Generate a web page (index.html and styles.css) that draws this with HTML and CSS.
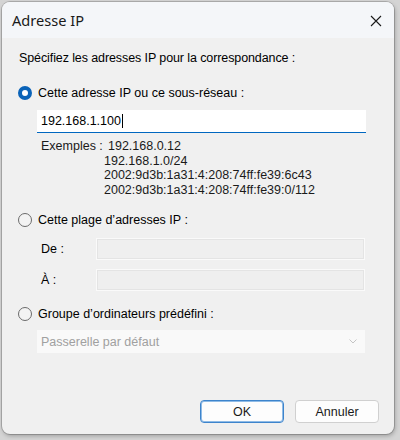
FILE: index.html
```html
<!DOCTYPE html>
<html lang="fr">
<head>
<meta charset="utf-8">
<title>Adresse IP</title>
<link rel="stylesheet" href="styles.css">
</head>
<body>
<div class="window">
  <div class="titlebar">
    <span class="title">Adresse IP</span>
    <svg class="close" width="12" height="12" viewBox="0 0 12 12"><path d="M1 1 L11 11 M11 1 L1 11" stroke="#1a1a1a" stroke-width="1.1" fill="none"/></svg>
  </div>
  <div class="content">
    <div class="prompt">Spécifiez les adresses IP pour la correspondance :</div>

    <div class="radio-row r1">
      <span class="radio checked"></span>
      <span>Cette adresse IP ou ce sous-réseau :</span>
    </div>
    <div class="ipinput"><span>192.168.1.100</span><span class="caret"></span></div>
    <div class="examples">
      <span class="ex-label">Exemples :</span>
      <div class="ex-list">
        <span class="first">192.168.0.12</span>
        <span>192.168.1.0/24</span>
        <span>2002:9d3b:1a31:4:208:74ff:fe39:6c43</span>
        <span>2002:9d3b:1a31:4:208:74ff:fe39:0/112</span>
      </div>
    </div>

    <div class="radio-row r2">
      <span class="radio"></span>
      <span>Cette plage d’adresses IP :</span>
    </div>
    <div class="range-row rr1"><span class="range-label">De :</span><span class="disabled-box"></span></div>
    <div class="range-row rr2"><span class="range-label">À :</span><span class="disabled-box"></span></div>

    <div class="radio-row r3">
      <span class="radio"></span>
      <span>Groupe d’ordinateurs prédéfini :</span>
    </div>
    <div class="select">
      <span>Passerelle par défaut</span>
      <svg width="8" height="5" viewBox="0 0 8 5"><path d="M0.5 0.5 L4 4 L7.5 0.5" stroke="#c4c4c4" stroke-width="1" fill="none"/></svg>
    </div>

    <div class="buttons">
      <button class="btn default">OK</button>
      <button class="btn">Annuler</button>
    </div>
  </div>
</div>
</body>
</html>
```
FILE: styles.css
```css
html, body {
  margin: 0;
  padding: 0;
}
body {
  width: 400px;
  height: 440px;
  background: #d4d4d4;
  font-family: "Liberation Sans", Arial, sans-serif;
  font-size: 12.5px;
  color: #000;
  overflow: hidden;
}
.window {
  margin: 2px 0 0 2px;
  width: 392px;
  height: 432px;
  background: #f0f0f0;
  border-radius: 8px;
  overflow: hidden;
  box-shadow: 0 0 0 1px rgba(0,0,0,0.18), 1px 2px 4px rgba(0,0,0,0.25);
  display: flex;
  flex-direction: column;
}
.titlebar {
  height: 36px;
  flex: none;
  background: #f4f6f9;
  display: flex;
  align-items: center;
  justify-content: space-between;
  padding: 0 12px 0 10px;
}
.title {
  font-family: "Noto Sans", "Open Sans", sans-serif;
  font-size: 14.6px;
  color: #1a1a1a;
}
.close {
  margin-top: 1px;
}
.content {
  display: flex;
  flex-direction: column;
  padding-left: 16px;
}
.prompt {
  margin-top: 12px;
  line-height: 16px;
  padding-left: 1px;
  letter-spacing: -0.1px;
}
.radio-row {
  display: flex;
  align-items: center;
  gap: 6px;
  height: 16px;
  line-height: 16px;
}
.r1 { margin-top: 19px; }
.r2 { margin-top: 15px; }
.r3 { margin-top: 15px; }
.radio {
  width: 14px;
  height: 14px;
  box-sizing: border-box;
  border-radius: 50%;
  border: 1px solid #6b6b6b;
  background: #f3f3f3;
  flex: none;
}
.radio.checked {
  border: 4px solid #0a63b8;
  background: #fff;
}
.ipinput {
  margin: 9px 0 0 19px;
  width: 329px;
  height: 23px;
  box-sizing: border-box;
  background: #fff;
  border-bottom: 1px solid #0067c0;
  display: flex;
  align-items: center;
  padding-left: 4px;
}
.caret {
  display: inline-block;
  width: 1px;
  height: 14px;
  background: #000;
  margin-left: 1px;
}
.examples {
  margin: 6px 0 0 23px;
  display: flex;
  line-height: 14.5px;
  color: #1a1a1a;
}
.ex-label {
  width: 63px;
  flex: none;
}
.ex-list {
  display: flex;
  flex-direction: column;
}
.ex-list .first {
  padding-left: 4px;
}
.range-row {
  display: flex;
  align-items: center;
  margin-left: 23px;
  height: 22px;
}
.rr1 { margin-top: 10px; }
.rr2 { margin-top: 9px; }
.range-label {
  width: 55px;
  flex: none;
}
.disabled-box {
  width: 269px;
  height: 22px;
  box-sizing: border-box;
  border: 1px solid #fafafa;
  background: #efefef;
  outline: 1px solid #e4e4e4;
  outline-offset: -2px;
}
.select {
  margin: 8px 0 0 19px;
  width: 328px;
  height: 23px;
  box-sizing: border-box;
  background: #f9f9f9;
  color: #a0a0a0;
  display: flex;
  align-items: center;
  justify-content: space-between;
  padding: 0 8px 0 4px;
}
.buttons {
  margin-top: 47px;
  display: flex;
  justify-content: flex-end;
  gap: 11px;
  padding-right: 15px;
}
.btn {
  width: 84px;
  height: 23px;
  box-sizing: border-box;
  font-family: "Liberation Sans", Arial, sans-serif;
  font-size: 12.5px;
  color: #1a1a1a;
  background: #fdfdfd;
  border: 1px solid #d0d0d0;
  border-radius: 4px;
  padding: 0;
}
.btn.default {
  border: 1px solid #3d84cc;
  box-shadow: inset 0 0 0 1px #8fbbe6;
}
```
